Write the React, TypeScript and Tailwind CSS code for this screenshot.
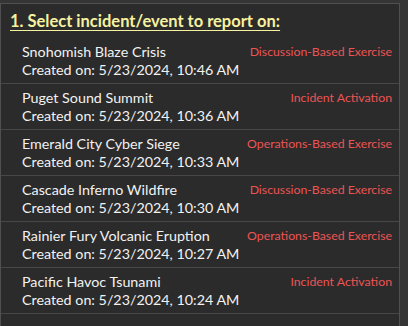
import React from 'react';

type Incident = {
  name: string;
  created: string;
  kind: string;
};

const incidents: Incident[] = [
  { name: 'Snohomish Blaze Crisis', created: '5/23/2024, 10:46 AM', kind: 'Discussion-Based Exercise' },
  { name: 'Puget Sound Summit', created: '5/23/2024, 10:36 AM', kind: 'Incident Activation' },
  { name: 'Emerald City Cyber Siege', created: '5/23/2024, 10:33 AM', kind: 'Operations-Based Exercise' },
  { name: 'Cascade Inferno Wildfire', created: '5/23/2024, 10:30 AM', kind: 'Discussion-Based Exercise' },
  { name: 'Rainier Fury Volcanic Eruption', created: '5/23/2024, 10:27 AM', kind: 'Operations-Based Exercise' },
  { name: 'Pacific Havoc Tsunami', created: '5/23/2024, 10:24 AM', kind: 'Incident Activation' },
];

export default function App() {
  return (
    <div className="h-[326px] w-[408px] overflow-hidden bg-[#353535] pt-[3px] font-['Lato','Open_Sans',sans-serif]">
      <div className="h-[340px] w-[400px] border border-[#505050] bg-[#2b2b2b]">
        {/* Header */}
        <h2 className="whitespace-nowrap px-[9px] text-[16.5px] font-bold leading-[34px] text-[#f7f2a0] underline decoration-1 underline-offset-[3px]">
          1. Select incident/event to report on:
        </h2>

        {/* Incident list */}
        <ul>
          {incidents.map((item) => (
            <li
              key={item.name}
              className="flex cursor-pointer justify-between border-b border-[#474747] pb-[4px] pl-[21px] pr-[7px] pt-[5px] hover:bg-[#333333]"
            >
              <div className="flex flex-col whitespace-nowrap text-[14.3px] text-[#f2f2f2]">
                <span className="leading-[18px]">{item.name}</span>
                <span className="leading-[18px]">Created on: {item.created}</span>
              </div>
              <span className="whitespace-nowrap text-[12.3px] leading-[18px] text-[#ec5454]">{item.kind}</span>
            </li>
          ))}
        </ul>
      </div>
    </div>
  );
}
